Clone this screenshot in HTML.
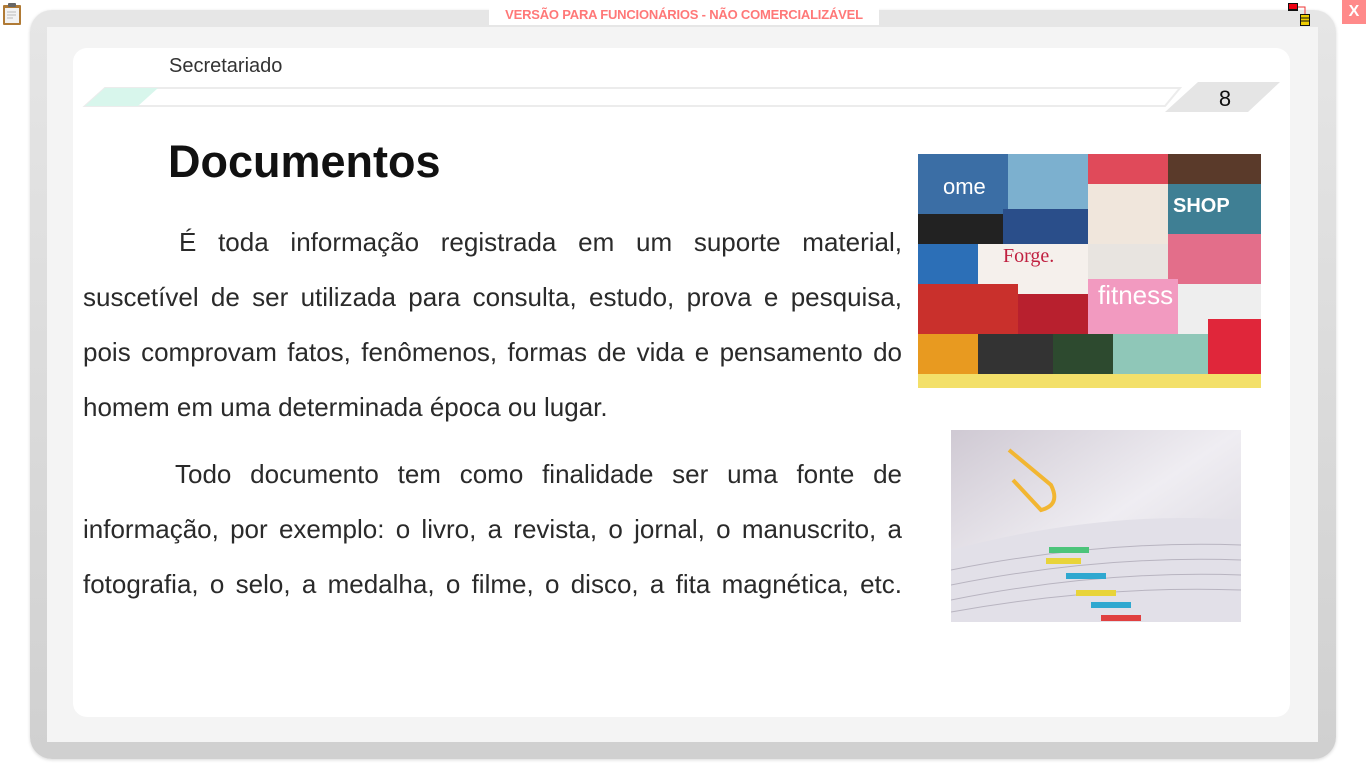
<!DOCTYPE html>
<html><head><meta charset="utf-8"><style>
*{margin:0;padding:0;box-sizing:border-box}
body{width:1366px;height:768px;background:#fff;position:relative;overflow:hidden;font-family:"Liberation Sans",sans-serif}
.frame{position:absolute;left:30px;top:10px;width:1306px;height:749px;border-radius:22px;background:linear-gradient(#e6e6e6,#d0d0d0);box-shadow:0 1px 3px rgba(0,0,0,.15)}
.panel{position:absolute;left:47px;top:27px;width:1271px;height:715px;background:#f4f4f4}
.card{position:absolute;left:73px;top:48px;width:1217px;height:669px;background:#fff;border-radius:14px}
.banner{position:absolute;left:489px;top:5px;width:390px;height:20px;background:#fff;color:#ff7878;font-size:13px;font-weight:bold;text-align:center;line-height:20px;letter-spacing:-0.2px}
.x{position:absolute;left:1342px;top:0;width:24px;height:24px;background:#ff8a8a;color:#fff;font-weight:bold;font-size:16px;text-align:center;line-height:24px}
.sec{position:absolute;left:169px;top:55px;font-size:20px;color:#333}
.txt{position:absolute;left:83px;width:819px;font-size:26px;color:#2a2a2a;line-height:55px;text-align:justify;text-indent:96px}
h1{position:absolute;left:168px;top:136px;font-size:45px;font-weight:bold;color:#111}
</style></head><body>
<div class="frame"></div>
<div class="panel"></div>
<div class="card"></div>
<svg style="position:absolute;left:1px;top:2px" width="22" height="24"><rect x="2" y="3" width="18" height="20" fill="#b07a35" rx="1"/><rect x="4" y="6" width="14" height="15" fill="#f2f2f2"/><rect x="7" y="1" width="8" height="4" fill="#666" rx="1"/><line x1="6" y1="10" x2="15" y2="10" stroke="#bbb"/><line x1="6" y1="13" x2="15" y2="13" stroke="#bbb"/><line x1="6" y1="16" x2="12" y2="16" stroke="#bbb"/></svg>
<div class="banner">VERSÃO PARA FUNCIONÁRIOS - NÃO COMERCIALIZÁVEL</div>
<svg style="position:absolute;left:1288px;top:2px" width="26" height="26"><rect x="0" y="1" width="10" height="8" fill="#111"/><rect x="1" y="2" width="8" height="5" fill="#e01"/><path d="M10 5h7v8" stroke="#e33" fill="none"/><rect x="12" y="12" width="10" height="12" fill="#111"/><rect x="13" y="13" width="8" height="10" fill="#ec0"/><line x1="13" y1="16" x2="21" y2="16" stroke="#111"/><line x1="13" y1="19" x2="21" y2="19" stroke="#111"/></svg>
<div class="x">X</div>
<div class="sec">Secretariado</div>
<svg style="position:absolute;left:80px;top:80px" width="1205" height="36">
<path d="M5 26 L25 8 L1100 8 L1085 26 Z" fill="#fff" stroke="#ececec" stroke-width="2"/>
<path d="M5 26 L25 8 L78 8 L58 26 Z" fill="#d8f6ec"/>
<path d="M1085 32 L1118 2 L1200 2 L1168 32 Z" fill="#e5e5e5"/>
<text x="1145" y="26" font-size="22" text-anchor="middle" fill="#111" font-family="Liberation Sans">8</text>
</svg>
<h1>Documentos</h1>
<div class="txt" style="top:215px">É toda informação registrada em um suporte material, suscetível de ser utilizada para consulta, estudo, prova e pesquisa, pois comprovam fatos, fenômenos, formas de vida e pensamento do homem em uma determinada época ou lugar.</div>
<div class="txt" style="top:447px;text-indent:92px;text-align-last:justify">Todo documento tem como finalidade ser uma fonte de informação, por exemplo: o livro, a revista, o jornal, o manuscrito, a fotografia, o selo, a medalha, o filme, o disco, a fita magnética, etc.</div>
<svg style="position:absolute;left:918px;top:154px" width="343" height="234">
<rect width="343" height="234" fill="#555"/>
<rect x="0" y="0" width="90" height="60" fill="#3b6ea5"/><rect x="90" y="0" width="80" height="55" fill="#7cb0cf"/><rect x="170" y="0" width="80" height="30" fill="#e04a5a"/><rect x="250" y="0" width="93" height="30" fill="#5a3a2a"/>
<rect x="170" y="30" width="80" height="60" fill="#f0e6dc"/><rect x="250" y="30" width="93" height="50" fill="#3f7f94"/>
<rect x="0" y="60" width="85" height="30" fill="#222"/><rect x="85" y="55" width="85" height="35" fill="#2a4e8a"/>
<rect x="0" y="90" width="60" height="40" fill="#2c6fb7"/><rect x="60" y="90" width="110" height="50" fill="#f5f0ec"/><rect x="170" y="90" width="80" height="35" fill="#e8e4e0"/><rect x="250" y="80" width="93" height="50" fill="#e36e8a"/>
<rect x="0" y="130" width="100" height="50" fill="#c9302c"/><rect x="100" y="140" width="70" height="40" fill="#b8202e"/><rect x="170" y="125" width="90" height="55" fill="#f29ac0"/><rect x="260" y="130" width="83" height="50" fill="#eee"/>
<rect x="0" y="180" width="60" height="40" fill="#e89a20"/><rect x="60" y="180" width="75" height="40" fill="#333"/><rect x="135" y="180" width="60" height="40" fill="#2d4a2f"/><rect x="195" y="180" width="95" height="40" fill="#8fc7b8"/><rect x="290" y="165" width="53" height="55" fill="#e0263a"/>
<rect x="0" y="220" width="343" height="14" fill="#f3e06a"/>
<text x="25" y="40" font-size="22" fill="#fff" font-family="Liberation Sans">ome</text><text x="255" y="58" font-size="20" fill="#fff" font-weight="bold" font-family="Liberation Sans">SHOP</text><text x="85" y="108" font-size="20" fill="#c02040" font-family="Liberation Serif">Forge.</text><text x="180" y="150" font-size="26" fill="#fff" font-family="Liberation Sans">fitness</text>
</svg>
<svg style="position:absolute;left:951px;top:430px" width="290" height="192">
<defs><linearGradient id="g" x1="0" y1="0" x2="1" y2="1"><stop offset="0" stop-color="#cfc9d3"/><stop offset=".5" stop-color="#efedf2"/><stop offset="1" stop-color="#d5d2db"/></linearGradient></defs>
<rect width="290" height="192" fill="url(#g)"/>
<path d="M0 120 Q150 80 290 90 L290 192 L0 192 Z" fill="#e2e0e8"/>
<g stroke="#b8b4c0" fill="none"><path d="M0 140 Q150 110 290 115"/><path d="M0 155 Q150 125 290 130"/><path d="M0 170 Q150 140 290 145"/><path d="M0 182 Q150 155 290 160"/></g>
<path d="M58 20 L100 55 Q110 75 90 80 L62 50" stroke="#f2b632" stroke-width="4" fill="none"/>
<rect x="98" y="117" width="40" height="6" fill="#4cc47a"/><rect x="95" y="128" width="35" height="6" fill="#e8d43a"/><rect x="115" y="143" width="40" height="6" fill="#2fa8d0"/><rect x="125" y="160" width="40" height="6" fill="#e8d43a"/><rect x="140" y="172" width="40" height="6" fill="#2fa8d0"/><rect x="150" y="185" width="40" height="6" fill="#e04040"/>
</svg>
</body></html>
